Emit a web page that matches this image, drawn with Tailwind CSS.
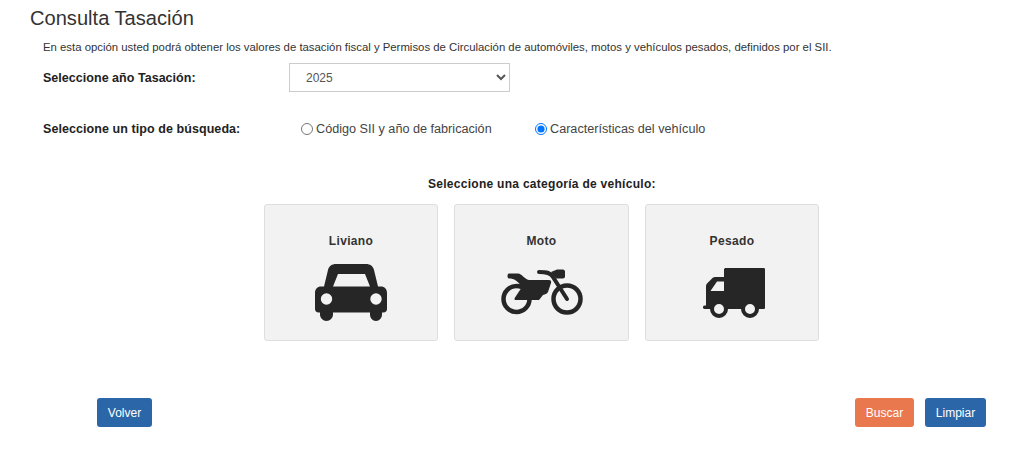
<!DOCTYPE html>
<html lang="es">
<head>
    <meta charset="UTF-8">
    <title>Consulta Tasación</title>
    <script src="https://cdn.jsdelivr.net/npm/@tailwindcss/browser@4"></script>
</head>
<body class="bg-white font-['Liberation_Sans',Arial,sans-serif] text-[#333]">
    <main class="h-[458px] w-[1024px] overflow-hidden">
        <h1 class="pl-[30px] pt-[7px] text-[20.1px] leading-[23px] text-[#333]">Consulta Tasación</h1>

        <p class="mt-[10px] pl-[43px] text-[11.37px] leading-[14px] text-[#333]">En esta opción usted podrá obtener los valores de tasación fiscal y Permisos de Circulación de automóviles, motos y vehículos pesados, definidos por el SII.</p>

        <div class="mt-[9px] flex items-center pl-[43px]">
            <label class="w-[246px] pt-[2px] text-[12.5px] font-bold tracking-[0.03px] text-[#222]">Seleccione año Tasación:</label>
            <select class="h-[29px] w-[221px] appearance-auto border border-[#ccc] bg-white pl-[12px] text-[12px] text-[#555]">
                <option>2025</option>
            </select>
        </div>

        <div class="mt-[28px] flex h-[18px] items-center pl-[43px]">
            <label class="w-[258px] text-[12.5px] font-bold tracking-[0.07px] text-[#222]">Seleccione un tipo de búsqueda:</label>
            <label class="flex w-[234px] items-center gap-[3px] text-[12.65px] text-[#444]">
                <input type="radio" name="tipo" class="m-0 h-[12px] w-[12px]">
                Código SII y año de fabricación
            </label>
            <label class="flex items-center gap-[3px] text-[12.65px] text-[#444]">
                <input type="radio" name="tipo" checked class="m-0 h-[12px] w-[12px]">
                Características del vehículo
            </label>
        </div>

        <h2 class="mt-[39px] pl-[428px] text-[12px] leading-[14px] font-bold tracking-[0.28px] text-[#222]">Seleccione una categoría de vehículo:</h2>

        <div class="mt-[13px] flex gap-[16px] pl-[264px]">
            <div class="flex h-[137px] w-[174px] flex-col items-center rounded-[3px] border border-[#dedede] bg-[#f2f2f2] pt-[29px]">
                <span class="text-[12px] leading-[14px] font-bold tracking-[0.35px] text-[#333]">Liviano</span>
                <svg class="mt-[16px]" width="72" height="57" viewBox="0 0 72 57">
                    <path fill="#262626" fill-rule="evenodd" d="M21 0H51C55 0 58 2 59 6L63 22.500H66C69.500 22.500 72 25 72 29V45C72 47 70.500 48.500 68.500 48.500H67V50.500C67 54 64.500 57 61 57C57.500 57 55 54 55 50.500V48.500H18V50.500C18 54 15 57 11.500 57C8 57 5 54 5 50.500V48.500H3.500C1.500 48.500 0 47 0 45V29C0 25 2.500 22.500 6 22.500H9L13 6C14 2 17 0 21 0ZM23 10 18 22.500H55L50 10ZM11.500 29.300A5.700 5.700 0 1 0 11.500 40.700A5.700 5.700 0 1 0 11.500 29.300ZM61 29.300A5.700 5.700 0 1 0 61 40.700A5.700 5.700 0 1 0 61 29.300Z"/>
                </svg>
            </div>
            <div class="flex h-[137px] w-[175px] flex-col items-center rounded-[3px] border border-[#dedede] bg-[#f2f2f2] pt-[29px]">
                <span class="text-[12px] leading-[14px] font-bold tracking-[0.35px] text-[#333]">Moto</span>
                <svg class="mt-[20px]" width="82" height="47" viewBox="0 0 82 47">
                    <circle cx="15.500" cy="31" r="13" fill="none" stroke="#262626" stroke-width="4.500"/>
                    <circle cx="66" cy="31" r="13.500" fill="none" stroke="#262626" stroke-width="4.500"/>
                    <path fill="none" stroke="#262626" stroke-width="4" stroke-linecap="round" d="M66 31 52 9C50 5 46 4 38 4"/>
                    <path fill="#262626" d="M8 5.500H17C21 5.500 23 11 28 12H48C50 12 50.500 13.500 50 15L47 24C46 26 44 26.500 42 27L38 32H15C13.500 32 13 31 14 29.500L21 19C17 13 13 10.500 8 10.500C6 10.500 6 5.500 8 5.500ZM50 4 56 1.500H62C63 1.500 64 2.500 64 3.500V8.500C64 9.500 63 10.500 62 10.500H55Z"/>
                </svg>
            </div>
            <div class="flex h-[137px] w-[174px] flex-col items-center rounded-[3px] border border-[#dedede] bg-[#f2f2f2] pt-[29px]">
                <span class="text-[12px] leading-[14px] font-bold tracking-[0.35px] text-[#333]">Pesado</span>
                <svg class="ml-[3px] mt-[20px]" width="62" height="50" viewBox="0 0 62 50">
                    <path fill="#262626" fill-rule="evenodd" d="M21 1.500C21 .5 22 0 23 0H60.500C61.500 0 62 .5 62 1.500V39.500C62 40.500 61.500 41 60.500 41H56A9 9 0 0 1 38 41H25A9 9 0 0 1 7 41H1.500C-.5 41 -.5 37.500 1.500 37.500H3V18.500C3 17 3.500 16 4.500 15L9.500 10C10.500 9.300 11.500 9 13 9H21ZM21 13.500H14L7.500 23H21ZM16 36A5 5 0 1 0 16 46A5 5 0 1 0 16 36ZM47 36A5 5 0 1 0 47 46A5 5 0 1 0 47 36Z"/>
                </svg>
            </div>
        </div>

        <div class="mt-[57px] flex items-center pl-[97px] pr-[38px]">
            <button class="h-[29px] w-[55px] rounded-[3px] bg-[#2b66a8] text-[12px] text-white">Volver</button>
            <button class="ml-auto h-[29px] w-[59px] rounded-[3px] bg-[#ea784e] text-[12px] text-white">Buscar</button>
            <button class="ml-[11px] h-[29px] w-[61px] rounded-[3px] bg-[#2b66a8] text-[12px] text-white">Limpiar</button>
        </div>
    </main>
</body>
</html>
